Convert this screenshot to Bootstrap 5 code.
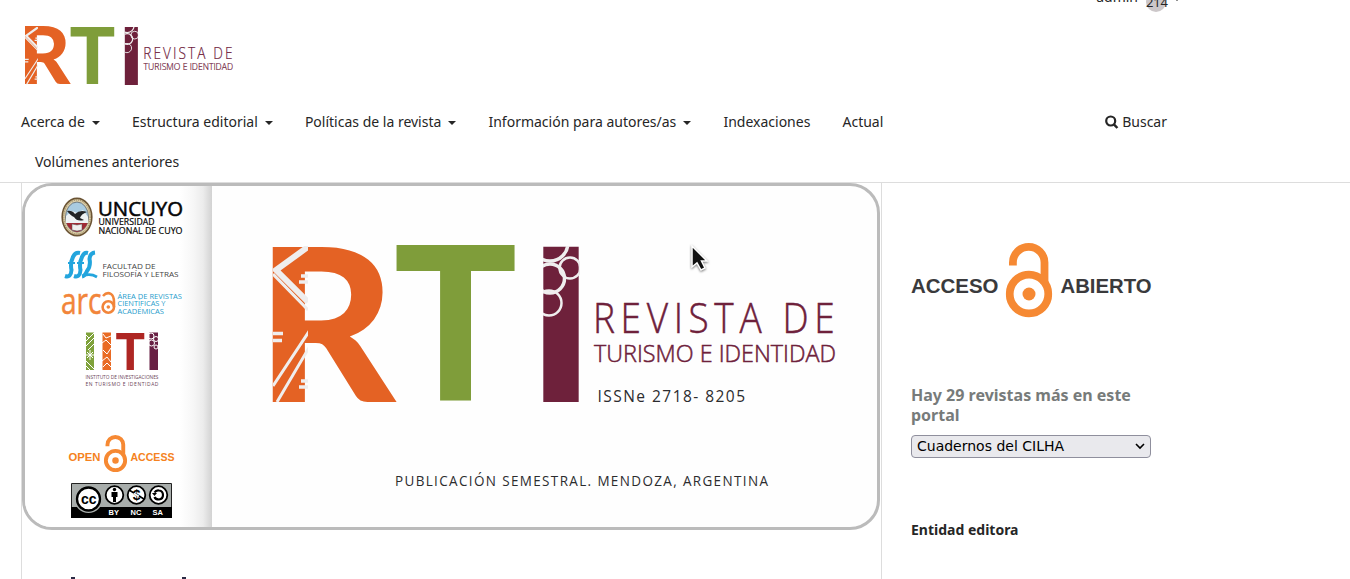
<!DOCTYPE html>
<html lang="es">
<head>
<meta charset="utf-8">
<meta name="viewport" content="width=device-width, initial-scale=1">
<title>Revista de Turismo e Identidad</title>
<link href="https://cdn.jsdelivr.net/npm/bootstrap@5.3.0/dist/css/bootstrap.min.css" rel="stylesheet">
<style>
html,body{height:579px;overflow:hidden}
body{font-family:"Noto Sans",sans-serif;font-size:14px;line-height:20px;color:#262626;background:#fff}
svg{display:block;flex:none;overflow:visible}
.site-head{height:183px;border-bottom:1px solid #ddd;padding-left:21px}
.head-inner{width:1146px}
.user-row{height:27px}
.user-row .user-in{margin-top:-13px;margin-right:-14px;gap:8px}
.count{width:20px;height:20px;border-radius:50%;background:#ccc7c9;font-size:13px;text-align:center;line-height:20px;margin-top:5px;letter-spacing:-.2px}
.user-in .tri{margin:1px 0 0 -8px}
.brand-link{margin-left:4px;display:block;height:85px}
.menu{gap:32.1px}
.menu a,.menu-b a,.find{color:#262626;text-decoration:none;font-size:14px;line-height:20px}
.tri:after{content:"";display:inline-block;margin-left:7px;vertical-align:2.5px;border:4px solid transparent;border-top-color:#262626;border-bottom:0}
.menu-b{padding:20px 0 0 14px}
.main-col{width:861px;height:396px;margin-left:21px;border:solid #ddd;border-width:0 1px;}
.banner{width:858px;height:347px;border:3px solid #bbb;border-radius:30px;background:#fefefe;overflow:hidden}
.partners{width:187px;padding:11px 0 0 36px;background:linear-gradient(90deg,#fff 155px,#f7f7f7 168px,#ececec 178px,#d2d2d2)}
.partners .g1{margin-top:13px}
.title-part{flex:1;padding:60px 0 0 61px}
.heading-top{margin:47px 0 0 49px;gap:107px}
.heading-top i{display:block;width:4px;height:2px;background:#2b2b45}
.side{width:240px;margin-left:29px;padding-top:58px}
.side h2{font-size:16px;line-height:20px;font-weight:700;color:#777b7a;margin:67px 0 10px;width:240px}
.pick{height:23px;border:1px solid #8f8f9d;border-radius:4px;background:#e9e9ed;color:#000;font:14px/20px "DejaVu Sans",sans-serif;padding:0 5px 1px;width:240px}
.side h3{font-size:14px;line-height:20px;font-weight:700;margin:62px 0 0}
.pointer{position:absolute;left:688px;top:242px}
</style>
</head>
<body>
<svg width="0" height="0" class="position-absolute">
 <defs>
  <clipPath id="cR"><path d="M273 246H308V402H273Z"/></clipPath>
  <clipPath id="cI"><path d="M543 246H580V402H543Z"/></clipPath>
 </defs>
 <symbol id="rti" viewBox="273 246 563 157" overflow="visible">
  <g font-family="Lato" font-weight="900" font-size="214">
   <text x="256.500" y="401.500" fill="#e46224" textLength="139" lengthAdjust="spacingAndGlyphs">R</text>
   <text x="393.500" y="400" font-size="213" fill="#7f9d3a" textLength="124" lengthAdjust="spacingAndGlyphs">T</text>
   <text x="525.500" y="402" fill="#6e213b" textLength="71" lengthAdjust="spacingAndGlyphs">I</text>
  </g>
  <g clip-path="url(#cR)" stroke="#efeeee" fill="none">
   <path d="M312 244L276 270L308 302" stroke-width="6"/><path d="M273 274L308 310M273 386L310 330M277 402L310 346" stroke-width="3"/>
   <path d="M301 276H308M299 282H308M273 333.500H283M273 340.500H282M301 381H308M299 387H308" stroke-width="3.500"/>
  </g>
  <g clip-path="url(#cI)" stroke="#efeeee" fill="none">
   <circle cx="550" cy="243" r="18" stroke-width="3.500"/><circle cx="570" cy="268" r="10.500" stroke-width="2.500"/>
   <circle cx="550" cy="278.500" r="14.500" stroke-width="3.500"/><circle cx="549" cy="303" r="12.500" stroke-width="2.500"/>
  </g>
  <g fill="#6e213b" font-family="'Open Sans'" font-weight="300">
   <text transform="translate(593 333) scale(.86 1)" font-size="43" textLength="281" stroke="#6e213b" stroke-width=".5">REVISTA DE</text>
   <text x="594" y="362" font-size="23.500" textLength="242" lengthAdjust="spacingAndGlyphs" stroke="#6e213b" stroke-width=".5">TURISMO E IDENTIDAD</text>
  </g>
 </symbol>
 <symbol id="lock" viewBox="1006 243 47 75">
  <g fill="none" stroke="#f68933" stroke-width="7.800"><circle cx="1029.500" cy="294" r="19.300"/><path d="M1013.400 265.500V262.500A15.800 15.600 0 0 1 1045 262.500V284"/></g>
  <circle cx="1029.500" cy="294" r="6.500" fill="#f68933"/>
 </symbol>
</svg>

<header class="site-head">
 <div class="head-inner">
  <div class="user-row d-flex justify-content-end"><div class="user-in d-flex align-items-start"><span>admin</span><span class="count">214</span><span class="tri"></span></div></div>
  <a class="brand-link" href="#" aria-label="Revista"><svg width="208" height="58"><use href="#rti"/></svg></a>
  <div class="d-flex justify-content-between">
   <nav class="menu d-flex"><a class="tri" href="#">Acerca de</a><a class="tri" href="#">Estructura editorial</a><a class="tri" href="#">Políticas de la revista</a><a class="tri" href="#">Información para autores/as</a><a href="#">Indexaciones</a><a href="#">Actual</a></nav>
   <a class="find d-flex align-items-center" href="#"><svg class="me-1" width="13" height="14" viewBox="0 0 13 14" fill="none" stroke="#262626" stroke-width="2.200"><circle cx="5.700" cy="6" r="4.500"/><path d="M8.900 9.300L12.400 13" stroke-width="2.500"/></svg>Buscar</a>
  </div>
  <nav class="menu-b"><a href="#">Volúmenes anteriores</a></nav>
 </div>
</header>

<div class="d-flex">
 <main class="main-col">
  <section class="banner d-flex">
   <div class="partners">
    <svg width="124" height="41" viewBox="61 197 124 41" font-family="'Open Sans'">
     <ellipse cx="77" cy="217" rx="14.800" ry="18.600" fill="#ddd0aa" stroke="#6b5434" stroke-width="1.600"/><ellipse cx="77" cy="217" rx="13.200" ry="17" fill="none" stroke="#8b7650" stroke-dasharray="1 1"/>
     <ellipse cx="77" cy="217" rx="11.500" ry="15" fill="#a9cbe0" stroke="#54585b" stroke-width=".7"/>
     <path d="M66 222H88Q85 231 77 232Q69 231 66 222" fill="#a12a35"/><path d="M66 216L72 211L77 213L83 210L88 217V223H66Z" fill="#edf2f4"/>
     <path d="M67 211Q72 210 75 214Q80 209 87 212Q81 214 80 218L84 220Q77 222 74 217Q71 216 67 211" fill="#202326"/><path d="M72 224L77 225L82 224V230L77 231L72 230Z" fill="#eee" stroke="#555" stroke-width=".5"/>
     <text x="98" y="216" font-size="20.500" textLength="85" lengthAdjust="spacingAndGlyphs" stroke="#111" stroke-width=".6">UNCUYO</text>
     <text x="98.500" y="225.400" font-size="8.300" textLength="56" lengthAdjust="spacingAndGlyphs" stroke="#111" stroke-width=".2">UNIVERSIDAD</text><text x="98.500" y="234.200" font-size="8.300" textLength="84" lengthAdjust="spacingAndGlyphs" stroke="#111" stroke-width=".2">NACIONAL DE CUYO</text>
    </svg>
    <svg class="g1" width="124" height="28" viewBox="61 251 124 28" font-family="'Open Sans'">
     <g fill="none" stroke="#23a5dd" stroke-width="4"><path d="M65 276Q71 278 71.500 270Q70 263 73 257Q75 252 80 253"/><path d="M74 276Q80 278 80.500 270Q79 263 82 257Q84 252 88 253"/><path d="M95 252.500Q90 253 89.500 259Q91 266 87 271Q85 276 82 276.500"/><path d="M83 276Q90 273 97 277" stroke-width="2.800"/><path d="M68 263H75M77 263H84" stroke-width="1.800"/></g>
     <text x="102.500" y="269" font-size="7.700" fill="#444" textLength="53" lengthAdjust="spacingAndGlyphs">FACULTAD DE</text><text x="102.500" y="277" font-size="7.700" fill="#444" textLength="76" lengthAdjust="spacingAndGlyphs">FILOSOFÍA Y LETRAS</text>
    </svg>
    <svg class="g1" width="124" height="25" viewBox="61 292 124 25" font-family="'Open Sans'">
     <text x="0" y="0" transform="translate(61 313.500) scale(.78 1)" font-size="37" fill="#f2853a" stroke="#f2853a" stroke-width=".5" textLength="52" lengthAdjust="spacingAndGlyphs">arc</text>
     <g fill="none" stroke="#f2853a" stroke-width="2.600"><circle cx="108.300" cy="307" r="5.700"/><path d="M103 296Q107 291.500 111 294Q114 296 114 302V307"/></g><circle cx="108.300" cy="307" r="1.800" fill="#f2853a"/>
     <g font-size="7" fill="#279dcc"><text x="117.500" y="298.900" textLength="64.500" lengthAdjust="spacingAndGlyphs">ÁREA DE REVISTAS</text><text x="117.500" y="306.200" textLength="48" lengthAdjust="spacingAndGlyphs">CIENTÍFICAS Y</text><text x="117.500" y="313.500" textLength="46.500" lengthAdjust="spacingAndGlyphs">ACADÉMICAS</text></g>
    </svg>
    <svg width="124" height="56" viewBox="61 317 124 56">
     <path d="M86 332.500H94V370H86Z" fill="#7fa23b"/><path d="M102.500 332.500H111V370H102.500Z" fill="#e96a23"/><path d="M149.500 332.500H158V370H149.500Z" fill="#692044"/>
     <text x="115.500" y="370" font-family="Lato" font-weight="900" font-size="52" fill="#ae2623" textLength="29.500" lengthAdjust="spacingAndGlyphs">T</text>
     <g fill="none" stroke="#fff" stroke-width="1"><path d="M86 341L94 333M86 346L94 338M86 335L89 338M87 352L93 358M93 352L87 358M90 350V360M86 355H94M86 361L94 369M86 366L90 370M94 344L88 350"/><path d="M103 334L106 338L111 336M102 343L106 340L111 345M103 350L107 354L111 348M102 361L107 357L111 362M103 367L107 363L111 367"/><circle cx="151" cy="336" r="3"/><circle cx="156" cy="339" r="2.500"/><circle cx="151.500" cy="343" r="3"/><circle cx="156" cy="347" r="2"/></g>
    </svg>
    <svg width="124" height="17" viewBox="61 373 124 17" font-family="'Open Sans'" fill="#6b4558" font-size="5">
     <text x="85.500" y="378.600" textLength="73" lengthAdjust="spacingAndGlyphs">INSTITUTO DE INVESTIGACIONES</text><text x="85.500" y="385.700" textLength="73">EN TURISMO E IDENTIDAD</text>
    </svg>
    <svg width="124" height="38" viewBox="61 435 124 38" style="margin-top:45px" font-family="'Liberation Sans'" font-weight="700" fill="#f58220" font-size="11.500">
     <text x="68.500" y="461.300" textLength="32" lengthAdjust="spacingAndGlyphs">OPEN</text><use href="#lock" x="103.500" y="435" width="24" height="37.500"/><text x="130.500" y="461.300" textLength="44" lengthAdjust="spacingAndGlyphs">ACCESS</text>
    </svg>
    <svg width="124" height="36" viewBox="61 483 124 36" style="margin-top:10px" font-family="'Liberation Sans'" font-weight="700">
     <path d="M71.500 483.500H171.500V517.500H71.500Z" fill="#a8adab" stroke="#222"/><path d="M71 507H172V518H71Z"/>
     <circle cx="88.500" cy="499" r="14" fill="#a8adab"/><circle cx="88.500" cy="499" r="11.500" fill="#fff" stroke="#000" stroke-width="2.300"/><text x="81" y="503.500" font-size="14" textLength="15.500">cc</text>
     <g fill="#fff" stroke="#000" stroke-width="1.800"><circle cx="114.500" cy="495" r="8.800"/><circle cx="136.500" cy="495" r="8.800"/><circle cx="158.500" cy="495" r="8.800"/></g>
     <circle cx="114.500" cy="489.500" r="1.700"/><path d="M111.500 492H117.500V497H116V502H113V497H111.500Z"/>
     <text x="132.800" y="500" font-size="14">$</text><path d="M130 491.500L143 498.500" stroke="#fff" stroke-width="1.500"/><path d="M129 490L134 493M139 496L144 499" stroke="#000" stroke-width="1.500"/>
     <path d="M154.500 492.500Q156 490 159 490.500Q163 491 163 495Q163 499 159 499.500Q155.500 499.500 154.500 497" fill="none" stroke="#000" stroke-width="2.200"/><path d="M152 493H157L154.500 496Z"/>
     <g fill="#fff" font-size="7.500"><text x="108.500" y="515.300">BY</text><text x="130.500" y="515.300">NC</text><text x="152.500" y="515.300">SA</text></g>
    </svg>
   </div>
   <div class="title-part">
    <svg width="563" height="157"><use href="#rti"/></svg>
    <svg width="563" height="88" viewBox="273 403 563 88" font-family="'Open Sans'" fill="#2c2c2e">
     <text transform="translate(597.500 402) scale(.94 1)" font-size="16.500" textLength="157">ISSNe 2718- 8205</text><text transform="translate(395 486) scale(.93 1)" font-size="14.500" textLength="401">PUBLICACIÓN SEMESTRAL. MENDOZA, ARGENTINA</text>
    </svg>
   </div>
  </section>
  <div class="heading-top d-flex" aria-hidden="true"><i></i><i></i></div>
 </main>
 <aside class="side">
  <svg width="242" height="77" viewBox="911 241 242 77" font-family="'Liberation Sans'" font-weight="700" font-size="21" fill="#3a3a3c">
   <text x="911" y="293" textLength="87.500" lengthAdjust="spacingAndGlyphs">ACCESO</text><use href="#lock" x="1005.500" y="243" width="47" height="75"/><text x="1060.500" y="293" textLength="91" lengthAdjust="spacingAndGlyphs">ABIERTO</text>
  </svg>
  <h2>Hay 29 revistas más en este portal</h2>
  <div class="pick d-flex justify-content-between align-items-center"><span>Cuadernos del CILHA</span><svg width="10" height="8" viewBox="0 0 10 8" fill="none" stroke="#000" stroke-width="1.600"><path d="M1 2L5 6L9 2"/></svg></div>
  <h3>Entidad editora</h3>
 </aside>
</div>
<svg class="pointer" width="22" height="30" viewBox="688 243 22 30"><path d="M692 247V268L697 264L701 271L705 269L701.500 262H707Z" fill="#111" stroke="#fff" stroke-width="1.500" style="filter:drop-shadow(0 1px 1px #777)"/></svg>
<script src="https://cdn.jsdelivr.net/npm/bootstrap@5.3.0/dist/js/bootstrap.bundle.min.js"></script>
</body>
</html>
